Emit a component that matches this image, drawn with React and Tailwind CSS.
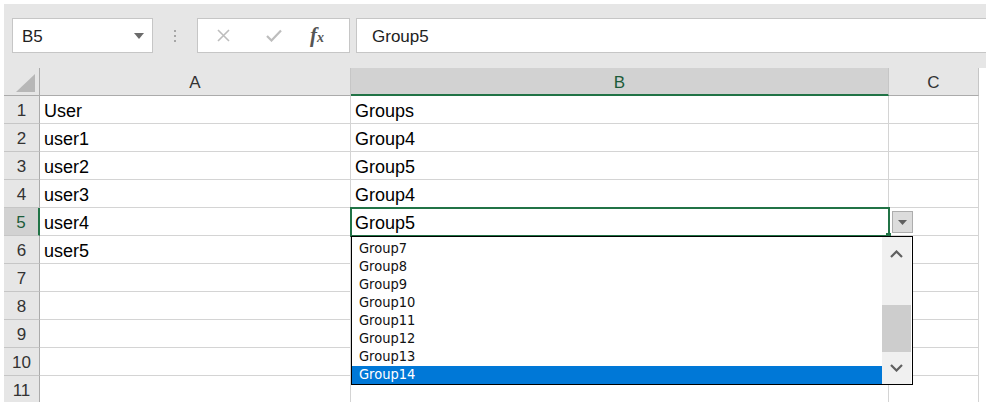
const FONT = { fontFamily: '"Liberation Sans", Arial, sans-serif' };

const ROWS = [
  ["User", "Groups"],
  ["user1", "Group4"],
  ["user2", "Group5"],
  ["user3", "Group4"],
  ["user4", "Group5"],
  ["user5", ""],
  ["", ""],
  ["", ""],
  ["", ""],
  ["", ""],
  ["", ""],
];

const OPTIONS = ["Group7", "Group8", "Group9", "Group10", "Group11", "Group12", "Group13", "Group14"];

function Toolbar() {
  return (
    <div className="flex items-start h-[64px] pt-[14px] bg-[#e6e6e6] overflow-hidden">
      {/* name box */}
      <div className="ml-[8px] w-[141px] h-[35px] shrink-0 bg-white border border-[#c6c6c6] flex items-center justify-between pl-[9px] pr-[8px] pt-[3px]">
        <span className="text-[17px] text-[#222]">B5</span>
        <svg className="-mt-[3px]" width="10" height="6" viewBox="0 0 10 6"><path d="M0 0 L10 0 L5 6 Z" fill="#6b6b6b" /></svg>
      </div>
      <div className="w-[44px] h-[35px] shrink-0 flex flex-col items-center justify-center gap-[3px]">
        <span className="w-[2px] h-[2px] bg-[#a6a6a6]" />
        <span className="w-[2px] h-[2px] bg-[#a6a6a6]" />
        <span className="w-[2px] h-[2px] bg-[#a6a6a6]" />
      </div>
      {/* cancel / enter / fx */}
      <div className="w-[153px] h-[35px] shrink-0 bg-white border border-[#c6c6c6] flex items-center">
        <svg className="ml-[19px]" width="13" height="13" viewBox="0 0 13 13">
          <path d="M1 1 L12 12 M12 1 L1 12" stroke="#bdbdbd" strokeWidth="1.6" />
        </svg>
        <svg className="ml-[36px]" width="16" height="13" viewBox="0 0 16 13">
          <path d="M1 7 L5.5 11.5 L15 1.5" stroke="#bdbdbd" strokeWidth="2.2" fill="none" />
        </svg>
        <span className="ml-[28px] text-[21px] italic font-bold text-[#555] leading-none" style={{ fontFamily: '"Liberation Serif", serif' }}>
          f<span className="text-[14px]">x</span>
        </span>
      </div>
      <div className="ml-[6px] w-[700px] h-[35px] shrink-0 bg-white border border-[#c6c6c6] flex items-center pl-[15px] pt-[3px]">
        <span className="text-[17px] text-[#222]">Group5</span>
      </div>
    </div>
  );
}

function Header() {
  return (
    <div className="flex h-[28px] bg-[#e6e6e6]">
      <div className="w-[36px] h-full border-r border-b border-[#ababab] flex items-end justify-end pr-[4px] pb-[3px]">
        <svg width="19" height="18" viewBox="0 0 19 18"><path d="M19 0 L19 18 L0 18 Z" fill="#b7b7b7" /></svg>
      </div>
      <div className="w-[311px] h-full border-r border-b border-r-[#c6c6c6] border-b-[#ababab] flex items-center justify-center pt-[2px] text-[17px] text-[#333]">A</div>
      <div className="w-[538px] h-full bg-[#d2d2d2] border-r border-r-[#c6c6c6] border-b-[2px] border-b-[#217346] flex items-center justify-center pt-[3px] text-[17px] text-[#1d5c3a]">B</div>
      <div className="w-[90px] h-full border-r border-b border-r-[#c6c6c6] border-b-[#ababab] flex items-center justify-center pt-[2px] text-[17px] text-[#333]">C</div>
    </div>
  );
}

function Dropdown() {
  return (
    <>
      {/* selection border */}
      <div className="absolute -top-px -left-px w-[540px] h-[30px] border-2 border-[#217346] pointer-events-none" />
      <div className="absolute left-[535px] top-[25px] w-[5px] h-[5px] bg-[#217346]" />
      {/* arrow button */}
      <div className="absolute left-[541px] top-[3px] w-[21px] h-[22px] bg-[#dcdcdc] border border-[#adadad] flex items-center justify-center">
        <svg width="9" height="5" viewBox="0 0 9 5"><path d="M0 0 L9 0 L4.5 5 Z" fill="#5f5f5f" /></svg>
      </div>
      {/* list */}
      <div className="absolute left-0 top-[28px] w-[562px] h-[149px] bg-white border border-black z-10 flex">
        <div className="flex-1 flex flex-col pt-[3px]" style={{ fontFamily: '"DejaVu Sans Condensed", "DejaVu Sans", sans-serif' }}>
          {OPTIONS.map((o) => (
            <div
              key={o}
              className={
                o === "Group14"
                  ? "h-[18px] pl-[7px] flex items-center text-[14.5px] bg-[#0078d7] text-white"
                  : "h-[18px] pl-[7px] flex items-center text-[14.5px] text-[#111]"
              }
            >
              {o}
            </div>
          ))}
        </div>
        <div className="w-[29px] mr-px bg-[#f0f0f0] flex flex-col">
          <div className="h-[34px] flex items-center justify-center">
            <svg width="13" height="8" viewBox="0 0 13 8"><path d="M1 7 L6.5 1.5 L12 7" stroke="#606060" strokeWidth="2.2" fill="none" /></svg>
          </div>
          <div className="h-[34px]" />
          <div className="h-[47px] bg-[#cdcdcd]" />
          <div className="flex-1 flex items-center justify-center">
            <svg width="13" height="8" viewBox="0 0 13 8"><path d="M1 1 L6.5 6.5 L12 1" stroke="#606060" strokeWidth="2.2" fill="none" /></svg>
          </div>
        </div>
      </div>
    </>
  );
}

function Row({ n, a, b }) {
  const active = n === 5;
  return (
    <div className="flex h-[28px]">
      <div
        className={
          active
            ? "w-[36px] h-full bg-[#d2d2d2] border-b border-b-[#c6c6c6] border-r-2 border-r-[#217346] flex items-center justify-center pt-[3px] text-[17px] text-[#1d5c3a]"
            : "w-[36px] h-full bg-[#e6e6e6] border-b border-b-[#c6c6c6] border-r border-r-[#ababab] flex items-center justify-center pt-[3px] text-[17px] text-[#333]"
        }
      >
        {n}
      </div>
      <div className="w-[311px] h-full border-r border-b border-[#d4d4d4] bg-white flex items-center pl-[4px] pt-[4px] text-[18px] text-black">{a}</div>
      <div className="relative w-[538px] h-full border-r border-b border-[#d4d4d4] bg-white flex items-center pl-[4px] pt-[4px] text-[18px] text-black">
        {b}
        {active && <Dropdown />}
      </div>
      <div className="w-[90px] h-full border-r border-b border-[#d4d4d4] bg-white" />
    </div>
  );
}

export default function App() {
  return (
    <div className="w-[986px] h-[411px] bg-white pt-[4px] pl-[4px] overflow-hidden" style={FONT}>
      <Toolbar />
      <div className="w-[975px] h-[334px] overflow-hidden">
        <Header />
        {ROWS.map((r, i) => (
          <Row key={i} n={i + 1} a={r[0]} b={r[1]} />
        ))}
      </div>
    </div>
  );
}
